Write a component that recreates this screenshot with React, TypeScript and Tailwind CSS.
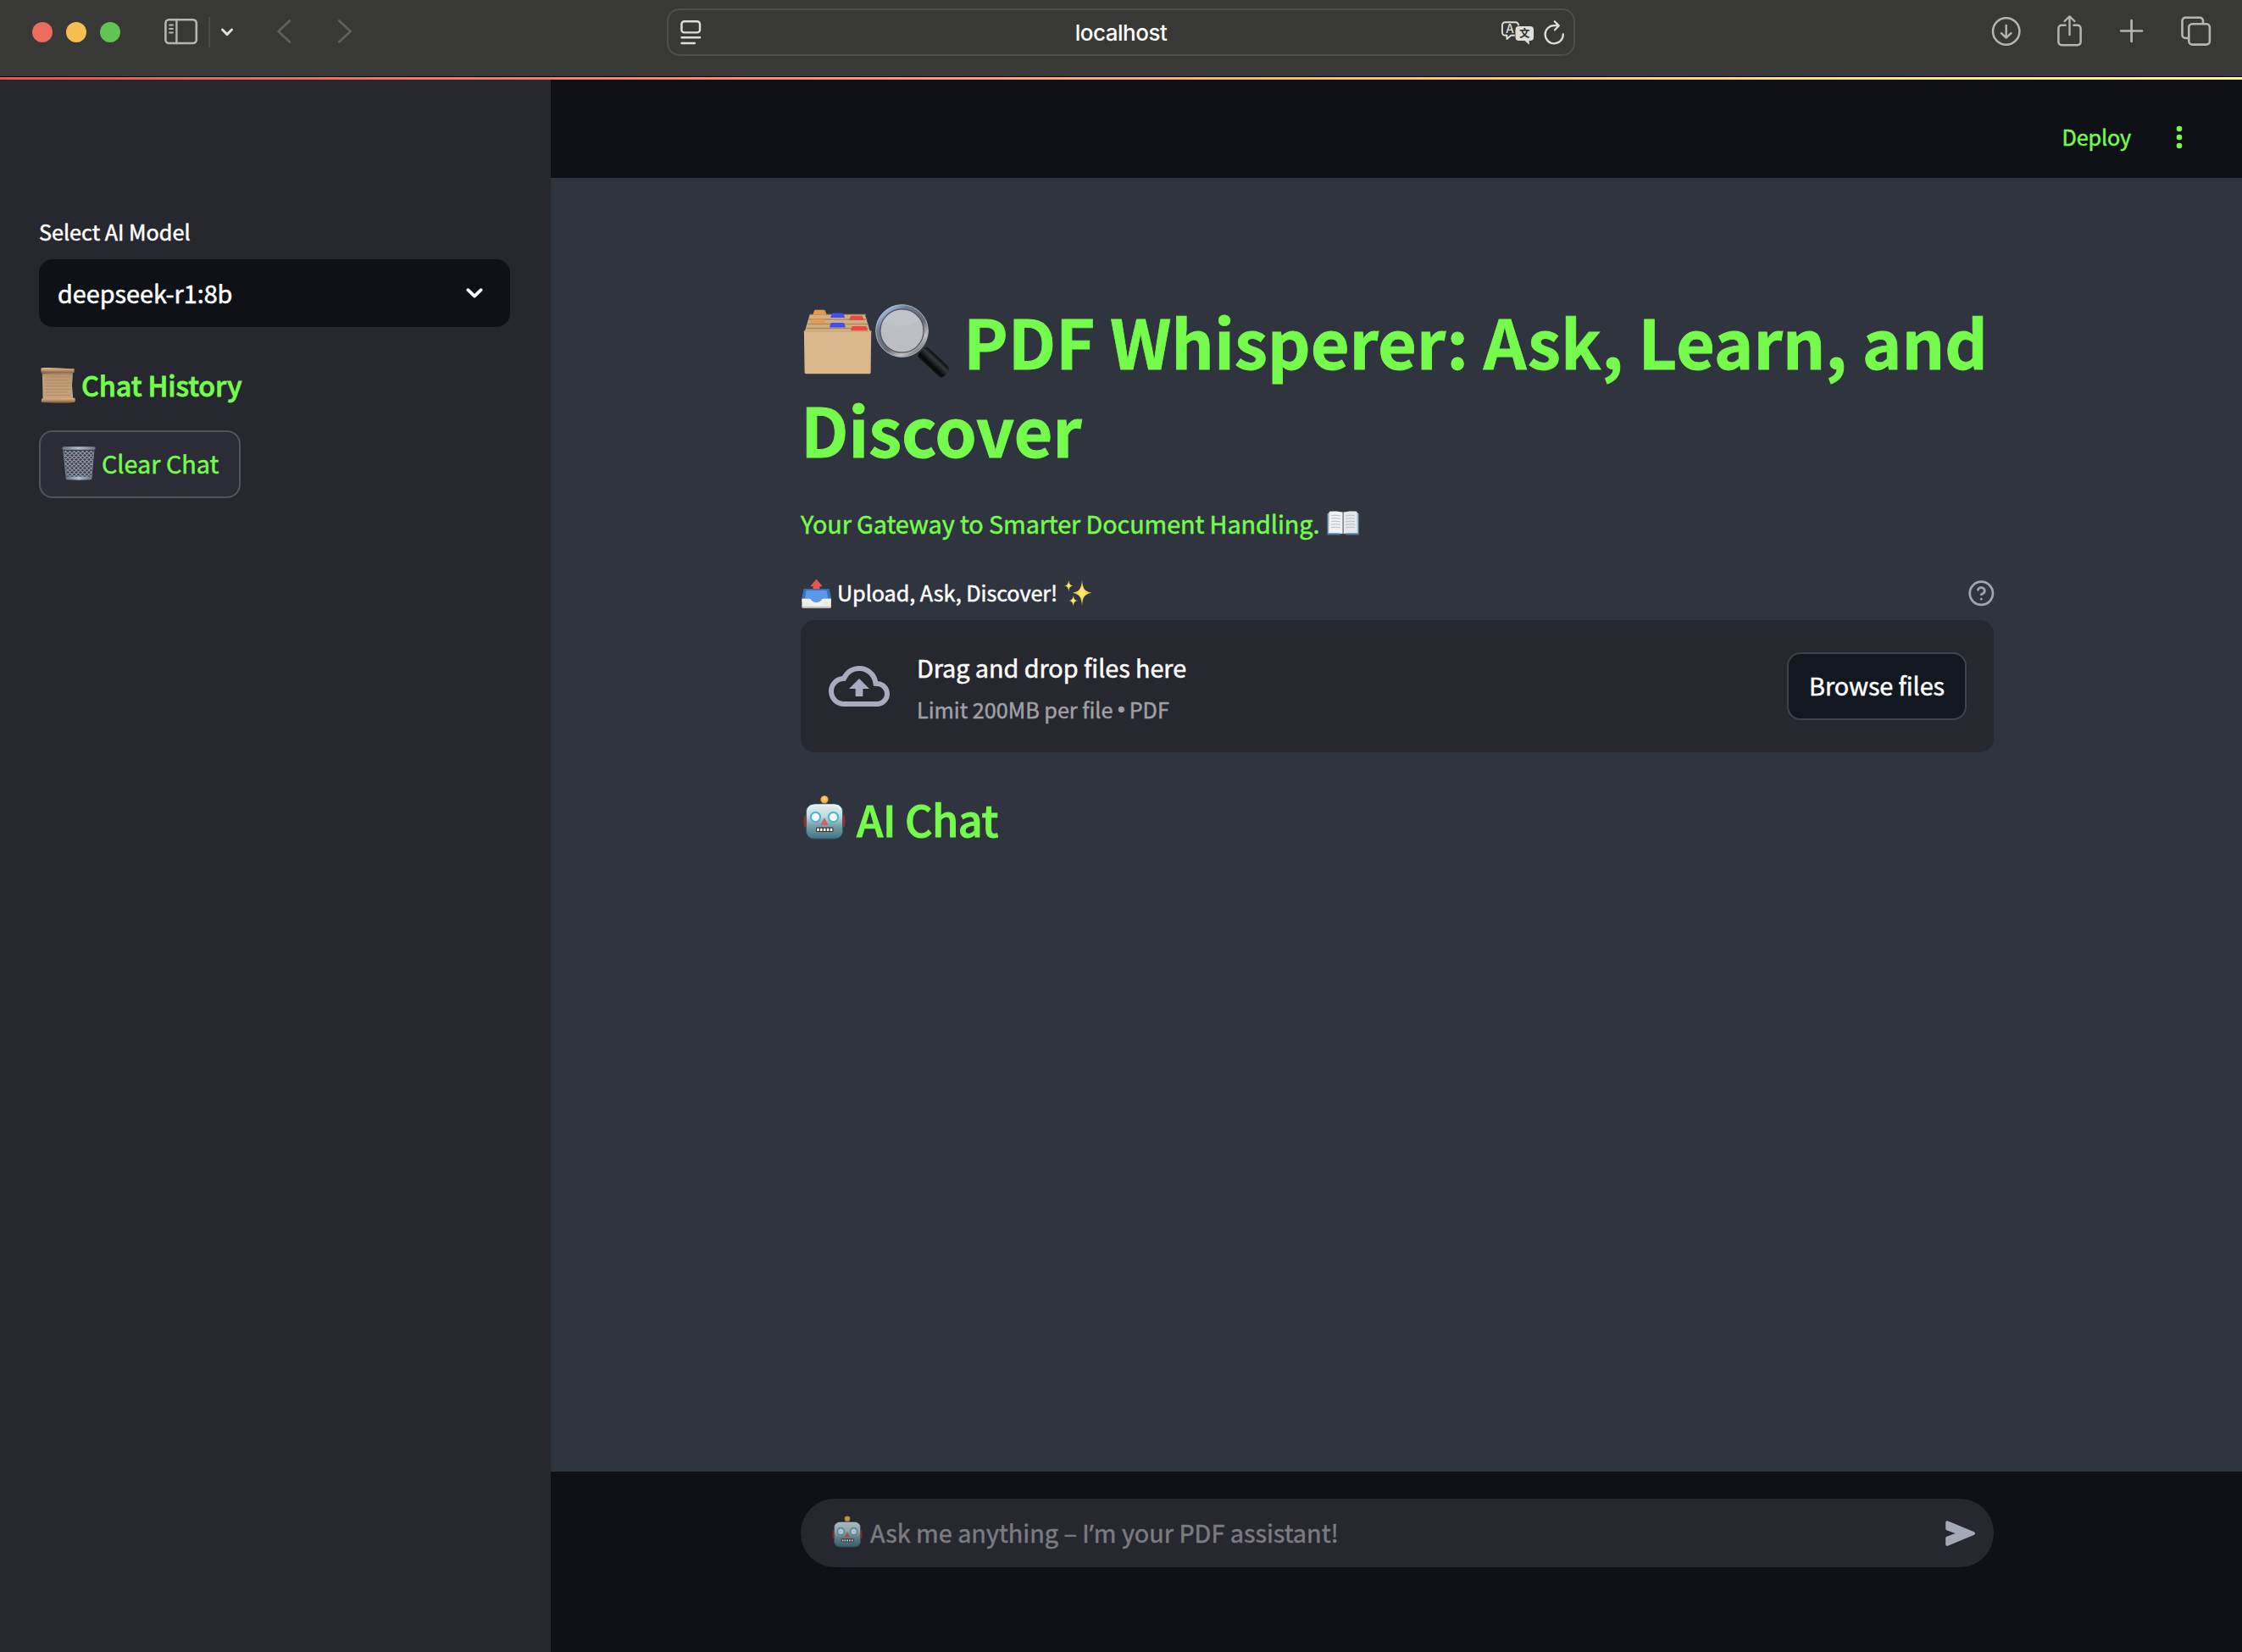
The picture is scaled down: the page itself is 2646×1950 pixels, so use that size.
import type { ReactNode } from "react";

type ArtProps = { box: string; w: number; h: number; label?: string; className?: string; children: ReactNode };

/* Fixed-size drawing whose viewBox uses window coordinates. */
function Art({ box, w, h, label, className = "", children }: ArtProps) {
  return (
    <svg
      width={w}
      height={h}
      viewBox={box}
      fill="none"
      strokeLinecap="round"
      strokeLinejoin="round"
      role={label ? "img" : undefined}
      aria-label={label}
      className={"block shrink-0 " + className}
    >
      {children}
    </svg>
  );
}

function BrowserBar() {
  return (
    <div className="flex h-[90px] w-full items-start bg-[#383836]">
      <div className="flex h-[76px] items-center gap-4 pl-[38px]">
        <span className="size-6 rounded-full bg-[#ec6a5e]" />
        <span className="size-6 rounded-full bg-[#f4bf4f]" />
        <span className="size-6 rounded-full bg-[#61c454]" />
      </div>
      <Art box="190 0 50 76" w={50} h={76} className="ml-12">
        <rect x="195.4" y="23.2" width="36.4" height="27.8" rx="4" stroke="#b5b5b2" strokeWidth="2.6" />
        <path d="M208.4 23v28" stroke="#b5b5b2" strokeWidth="2.4" />
        <path d="M200 29.5h4M200 34h4M200 38.5h4" stroke="#b5b5b2" strokeWidth="1.8" />
      </Art>
      <span className="mt-5 ml-[6px] h-9 w-[2px] bg-[#4b4b49]" />
      <Art box="256 0 24 76" w={24} h={76} className="ml-2">
        <path d="M262.5 35l5.5 5.6 5.5-5.6" stroke="#dededc" strokeWidth="3" />
      </Art>
      <Art box="320 0 30 76" w={30} h={76} className="ml-10">
        <path d="M341.8 24.5L328.6 37l13.2 12.5" stroke="#5f5f5d" strokeWidth="2.8" />
      </Art>
      <Art box="392 0 30 76" w={30} h={76} className="ml-[42px]">
        <path d="M400.3 24.5L413.6 37l-13.3 12.5" stroke="#5f5f5d" strokeWidth="2.8" />
      </Art>

      <div className="mt-[10px] ml-[365px] flex h-14 w-[1072px] items-center justify-between rounded-[15px] border-2 border-[#4e4e4c] pr-[9px] pl-[11px]">
        <Art box="800 20 30 36" w={30} h={36}>
          <rect x="804.4" y="25.2" width="21.6" height="13.2" rx="3.2" stroke="#dededc" strokeWidth="2.4" />
          <path d="M804.5 44.2h21.6M804.5 51h15.4" stroke="#dededc" strokeWidth="2.4" />
        </Art>
        <span className="ml-[48px] h-[31px] font-['Inter',sans-serif] text-[26px] leading-[31px] font-medium tracking-[-0.5px] text-white">
          localhost
        </span>
        <Art box="1768 18 80 40" w={80} h={40}>
          <path
            d="M1776.5 26.2h12a3.6 3.6 0 0 1 3.6 3.6v8.4a3.6 3.6 0 0 1-3.6 3.6h-5.2l-4.9 4.2v-4.2h-1.9a3.6 3.6 0 0 1-3.6-3.6v-8.4a3.6 3.6 0 0 1 3.6-3.6z"
            stroke="#dededc"
            strokeWidth="1.9"
          />
          <text x="1782" y="39" textAnchor="middle" fontFamily="Inter, sans-serif" fontWeight="500" fontSize="14" fill="#dededc">A</text>
          <path
            d="M1792.5 31h13.5a4 4 0 0 1 4 4v9a4 4 0 0 1-4 4h-1.2v4.8l-5.4-4.8h-6.9a4 4 0 0 1-4-4v-9a4 4 0 0 1 4-4z"
            fill="#dededc"
            stroke="#383836"
            strokeWidth="1.4"
            paintOrder="stroke"
          />
          <text x="1799.2" y="44.3" textAnchor="middle" fontFamily="Noto Sans CJK SC, sans-serif" fontWeight="700" fontSize="12.5" fill="#30302e">文</text>
          <path d="M1844.8 40.4a10.6 10.6 0 1 1-10.6-10.3l4.8.1" stroke="#dededc" strokeWidth="2.3" />
          <path d="M1834.8 25.4l5 4.9-4.8 5" stroke="#dededc" strokeWidth="2.3" />
        </Art>
      </div>

      <div className="ml-auto flex pr-8 text-[#b5b5b2]">
        <Art box="2346 0 44 76" w={44} h={76}>
          <circle cx="2367.7" cy="37" r="15.7" stroke="currentColor" strokeWidth="2.5" />
          <path d="M2367.7 30v14.5M2361.9 39.2l5.8 5.5 5.8-5.5" stroke="currentColor" strokeWidth="2.4" />
        </Art>
        <Art box="2422 0 42 76" w={42} h={76} className="ml-8">
          <path d="M2437.6 29.8h-4.4a3.8 3.8 0 0 0-3.8 3.8v15.8a3.8 3.8 0 0 0 3.8 3.8h18.6a3.8 3.8 0 0 0 3.8-3.8V33.6a3.8 3.8 0 0 0-3.8-3.8h-4.4" stroke="currentColor" strokeWidth="2.5" />
          <path d="M2442.5 20v21M2436.6 25l5.9-5.6 5.9 5.6" stroke="currentColor" strokeWidth="2.4" />
        </Art>
        <Art box="2496 0 40 76" w={40} h={76} className="ml-8">
          <path d="M2503.2 36.5h24.8M2515.6 24.2v24.8" stroke="currentColor" strokeWidth="2.7" />
        </Art>
        <Art box="2570 0 44 76" w={44} h={76} className="ml-[34px]">
          <rect x="2583.3" y="28.2" width="24.6" height="24.4" rx="4" stroke="currentColor" strokeWidth="2.6" />
          <path d="M2583 45h-3.7a3.8 3.8 0 0 1-3.8-3.8V24.6a3.8 3.8 0 0 1 3.8-3.8h16.9a3.8 3.8 0 0 1 3.8 3.8v3.2" stroke="currentColor" strokeWidth="2.6" />
        </Art>
      </div>
    </div>
  );
}

function Scroll() {
  return (
    <Art box="46 430 44 48" w={44} h={48} label="📜">
      <defs>
        <linearGradient id="paper" x1="0" x2="0" y1="0" y2="1">
          <stop offset="0" stopColor="#8b6b4c" />
          <stop offset=".18" stopColor="#bd9b74" />
          <stop offset="1" stopColor="#c4a37d" />
        </linearGradient>
        <linearGradient id="roll" x1="0" x2="0" y1="0" y2="1">
          <stop offset="0" stopColor="#e0bd90" />
          <stop offset=".45" stopColor="#b98f64" />
          <stop offset="1" stopColor="#6f5338" />
        </linearGradient>
      </defs>
      <path d="M49.8 438h36.400l-1.200 17 1.400 17H50.600z" fill="url(#paper)" />
      <path d="M54 445h29M54 448.600h26M54 452.200h29M54 455.800h27M54 459.400h29M54 463h26M54 466.500h28" stroke="#a98763" strokeWidth=".9" strokeDasharray="3 1.200" />
      <path d="M49 434.300c12-.9 26 1.200 38.600.9v4.800c-13 .2-22-.6-38 1.200-1.400-.8-1.600-5.800-.6-6.900z" fill="url(#roll)" />
      <path d="M49.500 470.500c12 .9 25-.8 38.800-.8.7 1.400.5 4-.2 5.300-12 1.300-27 .9-38.900 0-.7-1.300-.4-3.500.3-4.500z" fill="url(#roll)" />
    </Art>
  );
}

function Bin() {
  return (
    <Art box="70 523 46 48" w={46} h={48} label="🗑️">
      <defs>
        <pattern id="mesh" width="5" height="5" patternUnits="userSpaceOnUse">
          <path d="M-1-1l7 7M-1 6l7-7" stroke="#9096a5" strokeWidth="1.150" />
        </pattern>
        <linearGradient id="rim" x1="0" x2="1">
          <stop offset="0" stopColor="#6c7381" />
          <stop offset=".5" stopColor="#a9bfdc" />
          <stop offset="1" stopColor="#6c7381" />
        </linearGradient>
      </defs>
      <path d="M75 530h36l-3.200 35.500H78.800z" fill="#3d404e" />
      <path d="M75 530h36l-3.200 35.500H78.800z" fill="url(#mesh)" stroke="#7d8492" strokeWidth="1" />
      <path d="M78.300 562.500h29.600l-.5 3.500c-9 1.300-19 1.300-28.400 0z" fill="url(#rim)" />
      <path d="M79 566.500c9 .6 19 .6 28 0" stroke="#50453f" strokeWidth="1" />
      <rect x="73.300" y="527.200" width="39.400" height="3.600" rx="1.800" fill="url(#rim)" />
      <path d="M74.500 531.400h37" stroke="#4a3f3a" strokeWidth="1" />
    </Art>
  );
}

function Dividers() {
  return (
    <Art box="945.700 352 86 96" w={86} h={96} label="🗂️">
      <path d="M956.500 371h65l6 20h-77z" fill="#d2af82" />
      <path d="M957 371.400h65M955.500 377h68M953.800 382.500h71M952.500 387.500h73.500" stroke="#a98a62" strokeWidth="1.300" />
      <path d="M960 371.500l1.600-4.400c.3-.9 1-1.300 1.900-1.300h9.300c.9 0 1.500.4 1.900 1.200l1.700 4.500z" fill="#e8994f" />
      <path d="M980.800 375l1.600-4.500c.3-.6.8-.9 1.500-.9h11c.7 0 1.200.3 1.500.9l1.500 4.500z" fill="#3f4ff0" />
      <path d="M1002.800 378l1.700-4.400c.3-.6.8-.9 1.500-.9h11.400c.8 0 1.300.3 1.500 1l1.500 4.300z" fill="#e64a42" />
      <path d="M957 382l1.200-4.200c.3-.8.8-1.100 1.600-1.100h11.600c.8 0 1.300.3 1.700 1.100l1.700 4.200z" fill="#e8994f" />
      <path d="M979.800 386.400l1.300-4.600c.2-.6.700-.9 1.400-.9h13.200c.7 0 1.100.3 1.400.9l1.600 4.600z" fill="#3f4ff0" />
      <path d="M1004.500 391l1.500-5c.2-.7.800-1 1.500-1h14.500c.8 0 1.200.4 1.500 1l1.400 5z" fill="#e64a42" />
      <path d="M949.600 391.500c0-.7.400-1 1-1h77.200c.7 0 1.100.4 1.100 1l-.6 48c0 1.100-.6 1.700-1.700 1.700h-74.600c-1 0-1.700-.6-1.700-1.600z" fill="#d9b98c" />
      <path d="M950 391.200h78.600" stroke="#c8a87a" strokeWidth="1.200" />
    </Art>
  );
}

function Magnifier() {
  return (
    <Art box="1031 352 92 96" w={92} h={96} label="🔍">
      <defs>
        <linearGradient id="ring" x1=".1" y1="0" x2=".9" y2="1">
          <stop offset="0" stopColor="#b5d3f7" />
          <stop offset=".25" stopColor="#6d7a90" />
          <stop offset=".6" stopColor="#6b6b70" />
          <stop offset=".8" stopColor="#c4c2be" />
          <stop offset="1" stopColor="#55565a" />
        </linearGradient>
        <linearGradient id="grip" gradientUnits="userSpaceOnUse" x1="1092" y1="436" x2="1111" y2="416">
          <stop offset="0" stopColor="#2b2d31" />
          <stop offset=".3" stopColor="#060708" />
          <stop offset=".58" stopColor="#34373a" />
          <stop offset=".75" stopColor="#0c0d0e" />
          <stop offset="1" stopColor="#060606" />
        </linearGradient>
      </defs>
      <path d="M1084 418l8-9 2 2-6 9z" fill="#b8b8ba" />
      <path d="M1083.500 421.500c-.9-1.600-.4-3 .8-4.400l6.200-6.600c1.300-1.300 2.900-1.700 4.400-.4 8.200 7.200 16.700 14.800 24 22.700 1.200 1.300 1.600 2.600 1 4.100-1.600 3.700-4.600 7.200-8.200 8.600-1.500.5-2.900.1-4-1.200-8.100-7.700-15.700-14.800-24.200-22.800z" fill="url(#grip)" stroke="#2c2f34" strokeWidth=".8" />
      <circle cx="1064.500" cy="390.500" r="28.300" fill="#bdbec3" stroke="url(#ring)" strokeWidth="5.600" />
      <circle cx="1064.500" cy="390.500" r="25.600" stroke="#505259" strokeWidth="1.200" />
      <path d="M1043 380a24 24 0 0 1 42-2c-12 8-29 9-42 2z" fill="#c2c3c8" />
      <circle cx="1064.500" cy="390.500" r="30.800" stroke="#a9b7cb" strokeWidth=".9" />
    </Art>
  );
}

function Book() {
  return (
    <Art box="1564 600 42 36" w={42} h={36} label="📖">
      <path d="M1566.300 606h37.600v25.600h-37.600z" fill="#47779c" />
      <path d="M1567.500 606l2-2.500 15.600 1 15.600-1 2 2.500v23.500h-35.200z" fill="#c9ccd4" />
      <path d="M1569.400 604c5-.9 11-.8 15.300 1.200v25c-5-1.700-10.500-1.800-16.200-1.200z" fill="#f0f1f5" />
      <path d="M1600.800 604c-5-.9-11-.8-15.300 1.200v25c5-1.700 10.500-1.800 16.200-1.200z" fill="#e6e7ed" />
      <path d="M1572 608.500c3.500-.5 7-.3 9.500.4M1572 612c3.500-.5 7-.3 9.500.4M1571.700 615.500c3.500-.5 7-.3 9.800.4M1571.500 619c3.500-.5 7-.3 10 .4M1571.500 622.500c3.500-.5 7-.3 10 .4M1598 608.500c-3.500-.5-7-.3-9.500.4M1598 612c-3.500-.5-7-.3-9.500.4M1598.300 615.500c-3.500-.5-7-.3-9.800.4M1598.500 619c-3.500-.5-7-.3-10 .4M1598.500 622.500c-3.500-.5-7-.3-10 .4" stroke="#b4b6be" strokeWidth=".9" />
      <path d="M1585.100 605v25.500" stroke="#6f737d" strokeWidth="1.300" />
      <path d="M1581.500 630.300h7.200l-1.600 2.100h-4z" fill="#3a3230" />
    </Art>
  );
}

function Outbox() {
  return (
    <Art box="944 680 40 40" w={40} h={40} label="📤">
      <path d="M949.500 694h28.200l3.200 13v8.200c0 .9-.5 1.500-1.400 1.500h-31.700c-.9 0-1.400-.5-1.400-1.400V707z" fill="#eceae6" />
      <path d="M948.600 694h30.200l2.400 11.800h-35z" fill="#3670b8" />
      <path d="M951.500 696h24l2 10h-27.600z" fill="#5c98e8" />
      <path d="M946.600 705.700h9.400c.8 3.200 3.600 5 7.500 5s6.800-1.800 7.600-5h9.600v3.200h-7.500c-1.300 3.300-4.900 5.400-9.700 5.400s-8.600-2-9.900-5.400h-7z" fill="#f2f1ee" />
      <path d="M956.500 705.200c.8 3.200 3.500 4.700 7 4.700s6.200-1.500 7-4.700z" fill="#5c98e8" />
      <path d="M947 715.600h33.200" stroke="#bfbcb6" strokeWidth="1.400" />
      <path d="M963.500 682.500l7.400 8.800h-3.500v2.700h-7.700v-2.700h-3.500z" fill="#e2594c" />
    </Art>
  );
}

function Sparkles() {
  return (
    <Art box="1255 682 36 36" w={36} h={36} label="✨">
      <defs>
        <radialGradient id="spark">
          <stop offset="0" stopColor="#fff07a" />
          <stop offset=".5" stopColor="#f6d152" />
          <stop offset="1" stopColor="#e5a93e" />
        </radialGradient>
      </defs>
      <path d="M1277 684.500c.8 9.500 2.500 13.800 11.500 15.200-9 1.400-10.700 5.700-11.500 15.300-.8-9.600-2.500-13.900-11.500-15.300 9-1.400 10.700-5.700 11.500-15.200z" fill="url(#spark)" />
      <path d="M1261.300 684.500c.5 4.400 1.300 6.200 5 6.900-3.700.7-4.500 2.500-5 7-.5-4.500-1.300-6.300-5-7 3.700-.7 4.500-2.500 5-6.900z" fill="url(#spark)" />
      <path d="M1266.700 702.500c.5 4.100 1.500 5.800 5.200 6.500-3.700.7-4.700 2.500-5.200 6.700-.5-4.200-1.500-6-5.200-6.700 3.700-.7 4.700-2.400 5.200-6.500z" fill="url(#spark)" />
    </Art>
  );
}

function Robot({ w, h, className = "" }: { w: number; h: number; className?: string }) {
  return (
    <Art box="0 0 50 52" w={w} h={h} label="🤖" className={className}>
      <defs>
        <linearGradient id="face" x1="0" x2="0" y1="0" y2="1">
          <stop offset="0" stopColor="#e2f2f1" />
          <stop offset=".35" stopColor="#c3dbdc" />
          <stop offset=".62" stopColor="#7ba2aa" />
          <stop offset="1" stopColor="#3e7585" />
        </linearGradient>
        <radialGradient id="bulb" cx=".5" cy=".4" r=".6">
          <stop offset="0" stopColor="#ffe07a" />
          <stop offset="1" stopColor="#f09a30" />
        </radialGradient>
      </defs>
      <path d="M4 23H2.500C1 23 .5 27 .5 31s.5 6.500 2 6.500H4zM46 23h1.500c1.500 0 2 4 2 8s-.5 6.500-2 6.500H46z" fill="#a8282c" />
      <path d="M19 11.500c.6-4 11-4 11.800 0z" fill="#6d4f86" />
      <circle cx="25" cy="4.800" r="4.600" fill="url(#bulb)" />
      <rect x="3.400" y="10" width="43.200" height="41" rx="9" fill="url(#face)" stroke="#29596a" strokeWidth="1" />
      <path d="M6 17c1-4 4-5.800 8-5.800h22c4 0 7 1.800 8 5.800" stroke="#f4fbfa" strokeWidth="1.200" />
      <circle cx="14.500" cy="25.500" r="5.600" fill="#fff" stroke="#4db4da" strokeWidth="2.200" />
      <circle cx="35.500" cy="25.500" r="5.600" fill="#fff" stroke="#4db4da" strokeWidth="2.200" />
      <path d="M25 27.200l3.600 7h-7.200z" fill="#e2605c" stroke="#b84746" strokeWidth=".6" />
      <rect x="15" y="37.500" width="20.500" height="5.600" rx="1.400" fill="#3c3430" />
      <path d="M17.500 38.700v3.200M21.300 38.700v3.200M25.200 38.700v3.200M29.100 38.700v3.200M33 38.700v3.200" stroke="#fff" strokeWidth="2.500" strokeLinecap="butt" />
    </Art>
  );
}

function Sidebar() {
  return (
    <aside className="flex w-[650px] shrink-0 flex-col items-start bg-[#272730] pt-[159px] pl-[46px]">
      <label className="h-10 text-[25.2px] leading-10 whitespace-nowrap text-white">Select AI Model</label>
      <div className="mt-[13px] flex h-20 w-[556px] items-start justify-between rounded-2xl bg-[#0f1116] pt-[19px] pr-[28px] pl-[22px]">
        <span className="text-[28.8px] leading-[41px] whitespace-nowrap text-white">deepseek-r1:8b</span>
        <Art box="546 325 28 41" w={28} h={41}>
          <path d="M552.300 342.200l7.700 7.400 7.700-7.400" stroke="#fafafa" strokeWidth="3.800" />
        </Art>
      </div>
      <h3 className="mt-[44px] flex h-[47px] items-start">
        <Scroll />
        <span className="ml-[6px] text-[32.4px] leading-[47px] font-medium tracking-[-0.15px] whitespace-nowrap text-[#75fb4c] [-webkit-text-stroke:0.8px_#75fb4c]">
          Chat History
        </span>
      </h3>
      <button className="mt-[31px] flex h-20 w-[238px] items-start rounded-2xl border-2 border-[#53545c] bg-[#2b2c36] pl-[22px]">
        <div className="pt-[13px]">
          <Bin />
        </div>
        <span className="ml-1 pt-4 text-[28.8px] leading-[41px] whitespace-nowrap text-[#75fb4c]">Clear Chat</span>
      </button>
    </aside>
  );
}

function Uploader() {
  return (
    <section className="flex h-[156px] w-[1408px] items-start rounded-2xl bg-[#272730] pl-[33px]">
      <svg width="72" height="72" viewBox="0 0 24 24" fill="#a9abbf" className="mt-[42px] block shrink-0">
        <path d="M19.350 10.040A7.490 7.490 0 0 0 12 4C9.110 4 6.600 5.640 5.350 8.040A5.994 5.994 0 0 0 0 14c0 3.310 2.690 6 6 6h13c2.760 0 5-2.240 5-5 0-2.640-2.050-4.780-4.650-4.960zM19 18H6c-2.210 0-4-1.790-4-4 0-2.050 1.530-3.760 3.560-3.970l1.070-.110.500-.950A5.469 5.469 0 0 1 12 6c2.620 0 4.880 1.860 5.390 4.430l.300 1.500 1.530.110A2.980 2.980 0 0 1 22 15c0 1.650-1.350 3-3 3zM8 13h2.550v3h2.900v-3H16l-4-4z" />
      </svg>
      <div className="ml-8 pt-[35px]">
        <p className="h-[41px] text-[28.8px] leading-[41px] tracking-[-0.05px] whitespace-nowrap text-white">Drag and drop files here</p>
        <p className="mt-[11px] flex h-9 text-[25.2px] leading-9 whitespace-pre text-[#a0a0a4]">
          <span className="tracking-[-0.02px]">Limit 200MB per file </span>
          <span className="w-[8px] text-center font-['Liberation_Sans',sans-serif] text-[25px]">•</span>
          <span> PDF</span>
        </p>
      </div>
      <button className="mt-[38px] mr-8 ml-auto flex h-20 w-[212px] items-start justify-center rounded-2xl border-2 border-[#41424b] bg-[#131720] pt-4">
        <span className="text-[28.8px] leading-[41px] tracking-[-0.1px] whitespace-nowrap text-white">Browse files</span>
      </button>
    </section>
  );
}

export default function App() {
  return (
    <div className="flex h-[1950px] w-[2646px] flex-col overflow-hidden bg-[#0f1116] font-['Noto_Sans_CJK_SC',sans-serif]">
      <BrowserBar />
      <div className="h-px w-full bg-black" />
      <div className="h-[3px] w-full bg-linear-to-r from-[#eb5351] to-[#fffd87]" />

      <div className="flex min-h-0 grow [-webkit-text-stroke:0.5px_currentColor]">
        <Sidebar />
        <main className="flex grow flex-col bg-[#30343f]">
          <header className="flex h-[116px] items-start justify-end bg-[#0f1116] pt-[49px] pr-[68px]">
            <span className="text-[25.2px] leading-9 tracking-[-0.15px] whitespace-nowrap text-[#75fb4c]">Deploy</span>
            <Art box="2566 143 12 38" w={12} h={38} className="ml-[51px]">
              <g fill="#75fb4c">
                <circle cx="2572" cy="152" r="3.300" />
                <circle cx="2572" cy="162" r="3.300" />
                <circle cx="2572" cy="172" r="3.300" />
              </g>
            </Art>
          </header>

          <div className="ml-[295px] flex grow flex-col pt-[139px]">
            <h1 className="text-[79.2px] leading-[105px] font-bold whitespace-nowrap text-[#75fb4c] [-webkit-text-stroke:0.8px_#75fb4c]">
              <span className="flex h-[104px] tracking-[-0.15px]">
                <span className="flex w-[192px] shrink-0 pt-[3px]">
                  <Dividers />
                  <Magnifier />
                </span>
                <span>PDF Whisperer: Ask, Learn, and</span>
              </span>
              <span className="block h-[104px] tracking-[-0.25px]">Discover</span>
            </h1>
            <p className="mt-10 flex h-[41px] text-[28.8px] leading-[41px] tracking-[-0.09px] whitespace-nowrap text-[#75fb4c]">
              <span className="w-[619px]">Your Gateway to Smarter Document Handling.</span>
              <span className="pt-[3px]">
                <Book />
              </span>
            </p>
            <div className="mt-[43px] flex h-[51px] w-[1408px] items-start">
              <div className="-ml-px">
                <Outbox />
              </div>
              <span className="ml-1 w-[267px] text-[25.2px] leading-9 tracking-[-0.05px] whitespace-nowrap text-white">Upload, Ask, Discover!</span>
              <div className="pt-px">
                <Sparkles />
              </div>
              <svg width="32.700" height="32.700" viewBox="0 0 24 24" fill="none" stroke="#a3a4a9" strokeWidth="2" strokeLinecap="round" strokeLinejoin="round" className="mt-[2.600px] -mr-[1.400px] ml-auto block">
                <circle cx="12" cy="12" r="10" />
                <path d="M9.090 9a3 3 0 0 1 5.830 1c0 2-3 3-3 3" />
                <path d="M12 17h.01" />
              </svg>
            </div>
            <Uploader />
            <h2 className="mt-[42px] flex h-[73px] items-start pl-[3px] text-[#75fb4c]">
              <Robot w={50} h={52} className="mt-[9px]" />
              <span className="ml-[13px] text-[50.4px] leading-[73px] font-medium tracking-[-0.45px] whitespace-nowrap [-webkit-text-stroke:1px_#75fb4c]">AI Chat</span>
            </h2>
          </div>

          <footer className="h-[213px] bg-[#0f1116] pt-8 pl-[295px]">
            <div className="flex h-[81px] w-[1408px] items-start rounded-[40px] bg-[#272730] pl-[37px]">
              <Robot w={36} h={38} className="mt-5 opacity-70" />
              <span className="ml-[9px] pt-[19px] text-[28.8px] leading-[41px] whitespace-nowrap text-[#7c7c80]">
                Ask me anything – I
                <span className="font-['Noto_Sans',sans-serif]">’</span>
                m your PDF assistant!
              </span>
              <Art box="2292 1790 42 40" w={42} h={40} className="mt-[21px] mr-[19px] ml-auto">
                <path d="M2298 1797l31.200 13-31.200 13v-7.500l15-5.500-15-5.500z" fill="#a5a8b8" stroke="#a5a8b8" strokeWidth="3.600" />
              </Art>
            </div>
          </footer>
        </main>
      </div>
    </div>
  );
}
